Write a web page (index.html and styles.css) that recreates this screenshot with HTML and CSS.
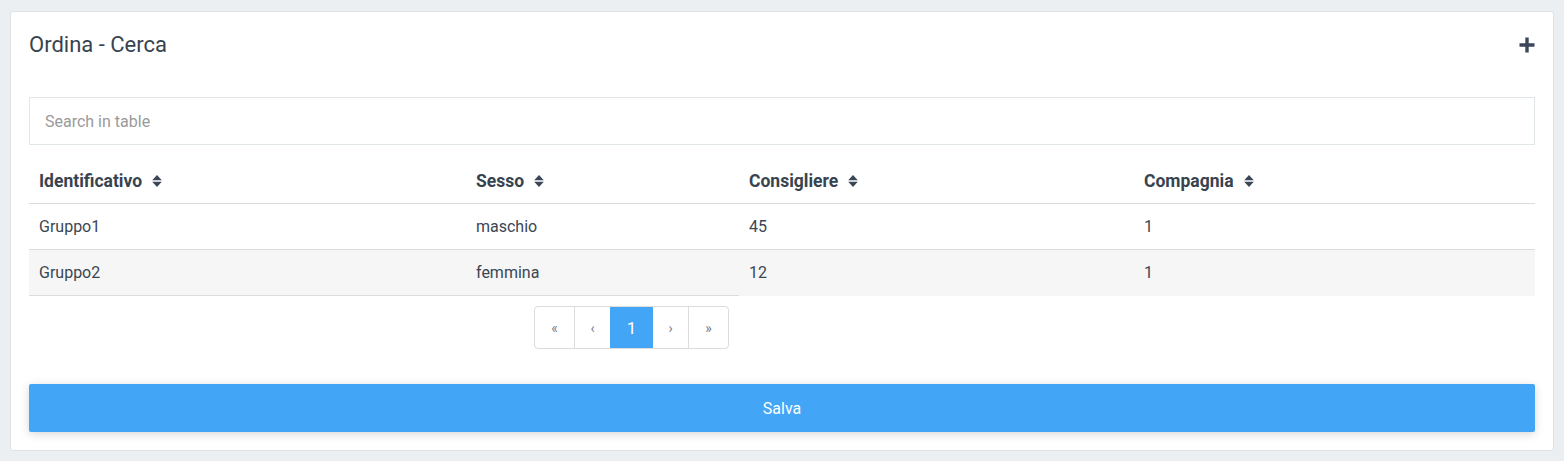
FILE: index.html
```html
<!DOCTYPE html>
<html lang="it">
<head>
<meta charset="utf-8">
<title>Ordina - Cerca</title>
<link rel="stylesheet" href="styles.css">
</head>
<body>
<div class="page">
  <div class="card">
    <div class="card-header">
      <h2 class="title">Ordina - Cerca</h2>
      <svg class="plus" width="16" height="16" viewBox="0 0 16 16" aria-hidden="true"><path d="M6.3 0.5h3.4v5.8H15.5v3.4H9.7V15.5H6.3V9.7H0.5V6.3h5.8z" fill="#3b4658"/></svg>
    </div>
    <input class="search" type="text" placeholder="Search in table">
    <table class="grid">
      <colgroup>
        <col class="c1"><col class="c2"><col class="c3"><col class="c4">
      </colgroup>
      <thead>
        <tr>
          <th>Identificativo<svg class="sort" viewBox="0 0 10 14" width="10" height="14"><path d="M5 1L9.8 6.3H0.2z M5 13L0.2 7.7H9.8z" fill="#3b4658"/></svg></th>
          <th>Sesso<svg class="sort" viewBox="0 0 10 14" width="10" height="14"><path d="M5 1L9.8 6.3H0.2z M5 13L0.2 7.7H9.8z" fill="#3b4658"/></svg></th>
          <th>Consigliere<svg class="sort" viewBox="0 0 10 14" width="10" height="14"><path d="M5 1L9.8 6.3H0.2z M5 13L0.2 7.7H9.8z" fill="#3b4658"/></svg></th>
          <th>Compagnia<svg class="sort" viewBox="0 0 10 14" width="10" height="14"><path d="M5 1L9.8 6.3H0.2z M5 13L0.2 7.7H9.8z" fill="#3b4658"/></svg></th>
        </tr>
      </thead>
      <tbody>
        <tr>
          <td>Gruppo1</td><td>maschio</td><td>45</td><td>1</td>
        </tr>
        <tr class="alt last">
          <td class="lined">Gruppo2</td><td class="lined">femmina</td><td>12</td><td>1</td>
        </tr>
      </tbody>
    </table>
    <ul class="pager">
      <li class="pg pg-first">«</li>
      <li class="pg pg-prev">‹</li>
      <li class="pg pg-active">1</li>
      <li class="pg pg-next">›</li>
      <li class="pg pg-last">»</li>
    </ul>
    <button class="save" type="button">Salva</button>
  </div>
</div>
</body>
</html>
```

FILE: styles.css
```css
html, body {
  margin: 0;
  padding: 0;
  background: #eceff1;
  font-family: Roboto, "Liberation Sans", Arial, sans-serif;
  color: #3a4654;
}

.page {
  padding: 11px 10px 10px 10px;
}

.card {
  background: #fff;
  border: 1px solid #dde2e4;
  border-radius: 3px;
  padding: 0 18px 18px 18px;
  width: 1544px;
  box-sizing: border-box;
}

.card-header {
  display: flex;
  align-items: center;
  justify-content: space-between;
  padding-top: 21px;
  height: 24px;
}

.title {
  margin: 0;
  font-size: 22px;
  font-weight: 400;
  line-height: 24px;
  color: #37434f;
}

.plus {
  display: block;
}

.search {
  display: block;
  box-sizing: border-box;
  width: 100%;
  height: 48px;
  margin: 40px 0 0 0;
  padding: 0 15px;
  border: 1px solid #e1e6e8;
  border-radius: 0;
  font-family: inherit;
  font-size: 16px;
  color: #3a4654;
  outline: none;
}

.search::placeholder {
  color: #9a9a9a;
}

.grid {
  width: 100%;
  margin-top: 14px;
  border-collapse: collapse;
  table-layout: fixed;
  font-size: 16px;
}

.c1 { width: 437px; }
.c2 { width: 273px; }
.c3 { width: 395px; }
.c4 { width: auto; }

.grid th,
.grid td {
  text-align: left;
  padding: 12px 10px;
}

.grid th {
  font-size: 17.5px;
  line-height: 20px;
  height: 20px;
  font-weight: 700;
  color: #37434f;
  border-bottom: 1px solid #dcdcdc;
  white-space: nowrap;
}

.grid td {
  line-height: 21px;
  height: 21px;
  font-weight: 400;
  color: #3a4654;
  border-bottom: 1px solid #dcdcdc;
}

.grid tr.alt td {
  background: #f6f6f6;
}

.grid tr.last td {
  border-bottom: 0;
}

.grid tr.last td.lined {
  border-bottom: 1px solid #dcdcdc;
}

.sort {
  vertical-align: -1px;
  margin-left: 10px;
}

.pager {
  list-style: none;
  margin: 10px 0 0 505px;
  padding: 0;
  display: flex;
  width: max-content;
  border: 1px solid #dcdcdc;
  border-radius: 4px;
  overflow: hidden;
}

.pg {
  height: 41px;
  display: flex;
  align-items: center;
  justify-content: center;
  font-size: 14px;
  color: #7a8089;
  border-left: 1px solid #dcdcdc;
}

.pg-first { width: 39px; border-left: 0; }
.pg-prev { width: 35px; }
.pg-active {
  width: 43px;
  background: #42a5f5;
  color: #fff;
  font-size: 17px;
  border-left: 0;
}
.pg-next { width: 35px; border-left: 0; }
.pg-last { width: 39px; }

.save {
  display: block;
  width: 100%;
  height: 48px;
  margin-top: 35px;
  border: 0;
  border-radius: 2px;
  background: #42a5f5;
  color: #fff;
  font-family: inherit;
  font-size: 16px;
  box-shadow: 0 2px 10px rgba(0, 0, 0, 0.16);
  cursor: pointer;
}
```
